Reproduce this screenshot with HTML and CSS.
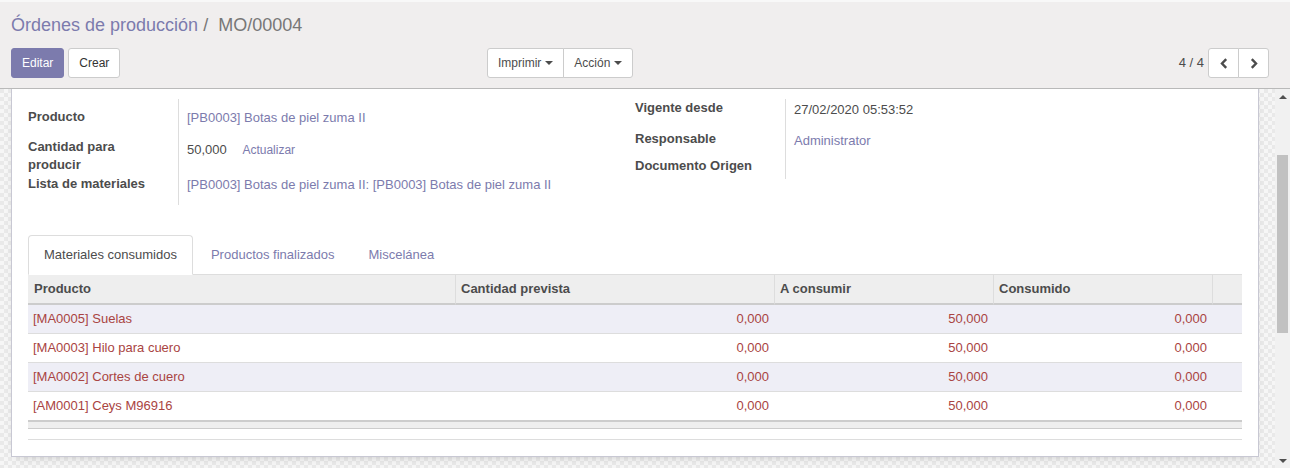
FILE: index.html
```html
<!DOCTYPE html>
<html lang="es">
<head>
<meta charset="utf-8">
<title>MO/00004</title>
<link rel="stylesheet" href="styles.css">
</head>
<body>
<div class="cp">
  <ol class="breadcrumb">
    <li class="bc-link">Órdenes de producción</li>
    <li class="bc-active">MO/00004</li>
  </ol>
  <div class="cp-bottom">
    <div class="cp-buttons">
      <button class="btn btn-primary">Editar</button>
      <button class="btn">Crear</button>
    </div>
    <div class="cp-sidebar">
      <div class="btn-group">
        <button class="btn btn-dd">Imprimir <span class="caret"></span></button>
        <button class="btn btn-dd">Acción <span class="caret"></span></button>
      </div>
    </div>
    <div class="pager">
      <span class="pager-value">4 / 4</span>
      <div class="btn-group">
        <button class="btn btn-icon" aria-label="Anterior">
          <svg width="8" height="11" viewBox="0 0 8 11"><polyline points="6.2,1.2 2,5.5 6.2,9.8" fill="none" stroke="#4c4c4c" stroke-width="2.4"/></svg>
        </button>
        <button class="btn btn-icon" aria-label="Siguiente">
          <svg width="8" height="11" viewBox="0 0 8 11"><polyline points="1.8,1.2 6,5.5 1.8,9.8" fill="none" stroke="#4c4c4c" stroke-width="2.4"/></svg>
        </button>
      </div>
    </div>
  </div>
</div>
<div class="main">
  <div class="sheet-bg">
    <div class="sheet">
      <div class="groups">
        <div class="group group-left">
          <div class="lbl p9">Producto</div>
          <div class="val p10"><span class="link">[PB0003] Botas de piel zuma II</span></div>
          <div class="lbl p1">Cantidad para producir</div>
          <div class="val p4">50,000 <span class="btn-link">Actualizar</span></div>
          <div class="lbl p2">Lista de materiales</div>
          <div class="val p3"><span class="link">[PB0003] Botas de piel zuma II: [PB0003] Botas de piel zuma II</span></div>
        </div>
        <div class="group group-right">
          <div class="lbl">Vigente desde</div>
          <div class="val p2">27/02/2020 05:53:52</div>
          <div class="lbl p1">Responsable</div>
          <div class="val p3"><span class="link">Administrator</span></div>
          <div class="lbl p1">Documento Origen</div>
          <div class="val"></div>
        </div>
      </div>
      <ul class="tabs">
        <li class="tab active">Materiales consumidos</li>
        <li class="tab">Productos finalizados</li>
        <li class="tab">Miscelánea</li>
      </ul>
      <table class="list">
        <colgroup>
          <col class="c1"><col class="c2"><col class="c3"><col class="c4"><col class="c5">
        </colgroup>
        <thead>
          <tr><th>Producto</th><th>Cantidad prevista</th><th>A consumir</th><th>Consumido</th><th></th></tr>
        </thead>
        <tbody>
          <tr class="odd"><td>[MA0005] Suelas</td><td class="num">0,000</td><td class="num">50,000</td><td class="num">0,000</td><td></td></tr>
          <tr><td>[MA0003] Hilo para cuero</td><td class="num">0,000</td><td class="num">50,000</td><td class="num">0,000</td><td></td></tr>
          <tr class="odd"><td>[MA0002] Cortes de cuero</td><td class="num">0,000</td><td class="num">50,000</td><td class="num">0,000</td><td></td></tr>
          <tr class="last"><td>[AM0001] Ceys M96916</td><td class="num">0,000</td><td class="num">50,000</td><td class="num">0,000</td><td></td></tr>
        </tbody>
        <tfoot>
          <tr><td></td><td></td><td></td><td></td><td></td></tr>
        </tfoot>
      </table>
      <div class="list-after"></div>
    </div>
  </div>
  <div class="scrollbar">
    <div class="sb-btn"><span class="sb-up"></span></div>
    <div class="sb-track"><div class="sb-thumb"></div></div>
    <div class="sb-btn"><span class="sb-down"></span></div>
  </div>
</div>
</body>
</html>
```
FILE: styles.css
```css
* { box-sizing: border-box; }
html, body {
  margin: 0;
  padding: 0;
}
body {
  width: 1290px;
  height: 468px;
  overflow: hidden;
  font-family: "Liberation Sans", Arial, sans-serif;
  font-size: 13px;
  line-height: 18px;
  color: #4c4c4c;
  background: #fff;
}

/* Control panel */
.cp {
  height: 89px;
  background: #f0eeee;
  border-top: 2px solid #f8f8f8;
  border-bottom: 1px solid #b9b9b9;
  padding: 8px 21px 10px 11px;
}
.breadcrumb {
  list-style: none;
  margin: 0;
  padding: 0;
  display: flex;
  height: 30px;
  line-height: 30px;
  font-size: 18px;
}
.bc-link { color: #7c7bad; }
.bc-link::after {
  content: "/\00a0";
  color: #777;
  padding: 0 5px;
}
.bc-active { color: #777; }

.cp-bottom {
  margin-top: 8px;
  display: grid;
  grid-template-columns: 476px 1fr auto;
  align-items: center;
}
.cp-buttons { display: flex; gap: 4px; }
.btn {
  height: 30px;
  font-family: inherit;
  font-size: 12px;
  line-height: 18px;
  padding: 5px 10px;
  border: 1px solid #ccc;
  border-radius: 3px;
  background: #fff;
  color: #333;
  display: inline-flex;
  align-items: center;
  justify-content: center;
}
.btn-primary {
  background: #7c7bad;
  border-color: #7c7bad;
  color: #fff;
}
.btn-group { display: flex; }
.btn-group .btn:not(:first-child) {
  border-top-left-radius: 0;
  border-bottom-left-radius: 0;
  margin-left: -1px;
}
.btn-group .btn:not(:last-child) {
  border-top-right-radius: 0;
  border-bottom-right-radius: 0;
}
.btn-dd { color: #4c4c4c; }
.caret {
  display: inline-block;
  width: 0;
  height: 0;
  margin-left: 4px;
  border-top: 4px solid #4c4c4c;
  border-left: 4px solid transparent;
  border-right: 4px solid transparent;
}
.pager {
  display: flex;
  align-items: center;
  gap: 4px;
}
.pager-value { color: #4c4c4c; font-size: 13px; }
.btn-icon { width: 31px; padding: 0; }

/* Main */
.main {
  display: flex;
  height: 379px;
}
.sheet-bg {
  flex: 1;
  padding: 0 16px 0 11px;
  background-color: #f3f3f3;
  background-image: repeating-conic-gradient(#f6f6f6 0 25%, #e9e9e9 0 50%);
  background-size: 8px 8px;
  overflow: hidden;
}
.sheet {
  background: #fff;
  border: 1px solid #c8c8d3;
  border-top: none;
  padding: 10px 16px 16px;
  box-shadow: 0 4px 10px -6px rgba(0,0,0,0.25);
}

.groups {
  display: grid;
  grid-template-columns: 1fr 1fr;
}
.group {
  display: grid;
  grid-template-columns: 151px 1fr;
  align-items: start;
}
.group-left { grid-template-rows: 38px 36px 32px; }
.group-right { grid-template-rows: 30px 27px 23px; }
.lbl {
  height: 100%;
  font-weight: bold;
  padding-right: 16px;
  border-right: 1px solid #ddd;
}
.val { padding-left: 8px; }
.p1 { padding-top: 1px; }
.p2 { padding-top: 2px; }
.p3 { padding-top: 3px; }
.p4 { padding-top: 4px; }
.p9 { padding-top: 9px; }
.p10 { padding-top: 10px; }
.link { color: #7c7bad; }
.btn-link {
  color: #7c7bad;
  font-size: 12px;
  margin-left: 12px;
}

/* Tabs */
.tabs {
  list-style: none;
  margin: 30px 0 0;
  padding: 0;
  display: flex;
  height: 40px;
  border-bottom: 1px solid #ddd;
}
.tab {
  height: 40px;
  padding: 10px 15px 11px;
  border: 1px solid transparent;
  border-radius: 4px 4px 0 0;
  margin-right: 2px;
  color: #7c7bad;
}
.tab.active {
  color: #4c4c4c;
  background: #fff;
  border-color: #ddd;
  border-bottom-color: #fff;
}

/* List */
.list {
  width: 100%;
  table-layout: fixed;
  border-collapse: separate;
  border-spacing: 0;
}
.c1 { width: 427px; }
.c2 { width: 319px; }
.c3 { width: 219px; }
.c4 { width: 219px; }
.c5 { width: 30px; }
.list th {
  height: 30px;
  background: #eee;
  font-weight: bold;
  text-align: left;
  padding: 0 5px;
  border-left: 1px solid #ddd;
  border-bottom: 2px solid #ccc;
  color: #4c4c4c;
  white-space: nowrap;
}
.list th:first-child { border-left: none; padding-left: 6px; }
.list td {
  height: 29px;
  padding: 0 5px;
  border-bottom: 1px solid #ddd;
  color: #a94442;
  white-space: nowrap;
}
.list tr.last td { border-bottom: none; height: 28px; }
.list tr.odd td { background: #eeeef6; }
.list td.num { text-align: right; }
.list tfoot td {
  height: 9px;
  padding: 0;
  background: #eee;
  border-top: 2px solid #ccc;
  border-bottom: 1px solid #ccc;
}
.list-after {
  height: 11px;
  border-bottom: 1px solid #ddd;
}

/* Scrollbar */
.scrollbar {
  width: 15px;
  background: #f1f1f1;
  display: flex;
  flex-direction: column;
}
.sb-btn {
  height: 15px;
  display: flex;
  align-items: center;
  justify-content: center;
}
.sb-up, .sb-down {
  width: 0;
  height: 0;
  border-left: 4px solid transparent;
  border-right: 4px solid transparent;
}
.sb-up { border-bottom: 4px solid #505050; }
.sb-down { border-top: 4px solid #505050; }
.sb-track { flex: 1; padding-top: 51px; }
.sb-thumb {
  margin: 0 2px;
  height: 178px;
  background: #c1c1c1;
}
```
